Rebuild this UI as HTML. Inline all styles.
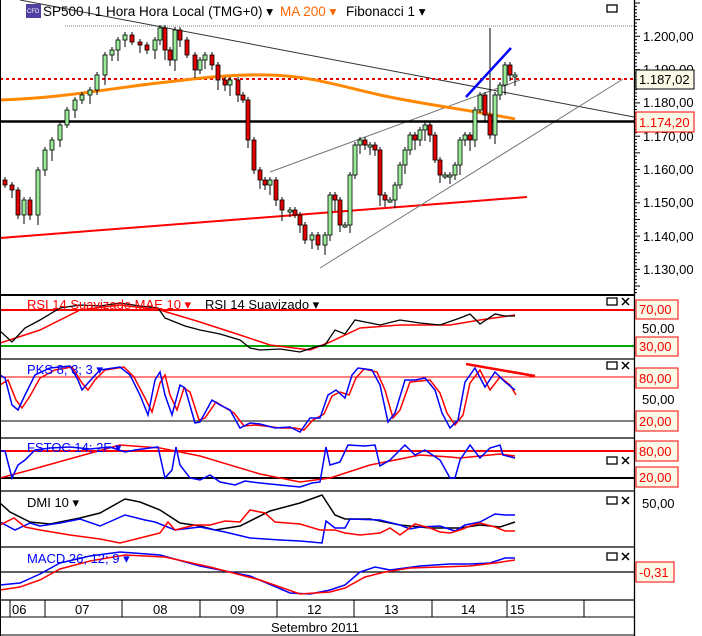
<!DOCTYPE html>
<html><head><meta charset="utf-8"><style>
html,body{margin:0;padding:0;background:#fff;width:702px;height:636px;overflow:hidden}
svg text{font-family:"Liberation Sans",Arial,sans-serif}
</style></head><body>
<svg id="s" width="702" height="636" xmlns="http://www.w3.org/2000/svg">
<rect width="702" height="636" fill="#fff"/>
<line x1="65" y1="26" x2="634" y2="26" stroke="#aaa" stroke-width="1.5" stroke-dasharray="1,1"/>
<line x1="20" y1="0" x2="634" y2="117" stroke="#333" stroke-width="1"/>
<line x1="0" y1="238" x2="527" y2="197" stroke="#f00" stroke-width="2"/>
<line x1="270" y1="172" x2="520" y2="80" stroke="#777" stroke-width="1"/>
<line x1="320" y1="268" x2="623" y2="79" stroke="#777" stroke-width="1"/>
<line x1="0" y1="79" x2="634" y2="79" stroke="#e00" stroke-width="2" stroke-dasharray="3,3"/>
<line x1="0" y1="121.5" x2="634" y2="121.5" stroke="#000" stroke-width="2.5"/>
<path d="M0,100 C60,98 100,90 150,84 S230,74 270,75 S340,86 380,95 S470,110 515,119" fill="none" stroke="#f80" stroke-width="3"/>
<g id="candles"></g>
<line x1="466" y1="97" x2="511" y2="48" stroke="#00f" stroke-width="2.5"/>
<line x1="0" y1="295" x2="634" y2="295" stroke="#000" stroke-width="2"/>
<rect x="26" y="4" width="15" height="14" fill="#5040a0"/>
<text x="27" y="13" font-size="6" fill="#fff">CFD</text>
<text x="43" y="16" font-size="13.5" fill="#000">SP500 I 1 Hora Hora Local (TMG+0)  ▾</text>
<text x="280" y="16" font-size="13.5" fill="#f60">MA 200 ▾</text>
<text x="346" y="16" font-size="13.5" fill="#000">Fibonacci 1 ▾</text>
<rect x="607" y="5" width="10" height="7" fill="none" stroke="#000" stroke-width="1.3"/>
<line x1="0" y1="310" x2="634" y2="310" stroke="#f00" stroke-width="2"/>
<line x1="0" y1="346" x2="634" y2="346" stroke="#0a0" stroke-width="2"/>
<polyline fill="none" stroke="#f00" stroke-width="1.5" points="0,343 40,330 80,310 120,305 160,310 200,322 240,335 270,345 310,350 330,342 360,328 400,325 450,325 480,320 515,315"/>
<polyline fill="none" stroke="#000" stroke-width="1.3" points="0,331 12,342 25,328 40,320 60,308 80,305 100,306 120,303 140,306 158,308 165,318 175,322 185,326 200,330 220,334 240,340 250,348 260,350 280,349 300,352 315,347 325,345 335,330 345,334 355,320 380,325 400,320 420,323 440,325 460,318 470,314 480,324 495,314 505,316 515,316"/>
<text x="27" y="309" font-size="13" fill="#f00">RSI 14 Suavizado MAE 10 ▾</text>
<text x="205" y="309" font-size="13" fill="#000">RSI 14 Suavizado ▾</text>
<line x1="0" y1="359" x2="634" y2="359" stroke="#000" stroke-width="1.3"/>
<line x1="0" y1="377" x2="634" y2="377" stroke="#f00" stroke-width="1"/>
<line x1="0" y1="421" x2="634" y2="421" stroke="#000" stroke-width="1"/>
<polyline fill="none" stroke="#f00" stroke-width="1.5" points="0,385 8,380 16,400 22,408 30,396 40,378 55,370 72,367 82,383 88,390 95,380 105,370 124,367 134,377 145,398 152,412 160,383 165,375 170,395 177,410 184,388 190,392 199,420 205,418 216,402 224,407 234,413 244,426 255,425 265,426 280,428 295,428 304,430 313,420 324,414 332,396 340,392 349,395 356,378 364,369 377,372 385,390 393,418 400,410 410,382 420,381 430,380 440,393 447,413 455,425 463,415 470,383 480,370 490,390 500,377 510,385 516,395"/>
<polyline fill="none" stroke="#00f" stroke-width="1.5" points="0,375 5,378 12,405 18,410 25,395 35,375 50,368 70,366 78,380 82,390 88,383 100,370 120,367 130,375 140,395 148,415 155,380 160,372 165,395 172,415 180,385 185,388 195,423 200,422 212,400 220,405 230,410 240,428 250,423 260,424 275,428 290,427 300,432 310,418 320,418 328,395 336,390 345,398 352,375 358,368 372,370 380,385 388,422 395,413 405,380 415,380 425,378 435,390 442,413 450,428 458,420 465,382 475,368 485,387 495,372 505,382 515,390"/>
<line x1="466" y1="364" x2="535" y2="376" stroke="#f00" stroke-width="2.5"/>
<text x="27" y="374" font-size="13" fill="#00f">PKS 8; 3; 3 ▾</text>
<line x1="0" y1="438" x2="634" y2="438" stroke="#000" stroke-width="1.3"/>
<line x1="0" y1="451" x2="634" y2="451" stroke="#f00" stroke-width="2"/>
<line x1="0" y1="478" x2="634" y2="478" stroke="#000" stroke-width="2"/>
<polyline fill="none" stroke="#f00" stroke-width="1.5" points="0,478 30,470 80,456 120,445 160,448 200,456 260,474 300,482 330,478 370,465 420,455 450,457 460,458 500,454 515,456"/>
<polyline fill="none" stroke="#00f" stroke-width="1.5" points="0,451 5,451 12,478 18,465 25,460 35,450 50,448 70,447 90,449 110,447 125,452 135,450 150,448 158,447 165,478 172,470 176,447 180,465 190,478 200,480 210,475 220,482 235,485 245,481 260,483 280,485 300,487 312,483 320,482 326,447 330,465 340,462 348,445 365,446 375,445 380,466 390,460 400,450 405,445 415,455 425,450 440,460 450,478 455,478 460,460 470,445 480,458 490,448 500,445 503,455 515,458"/>
<text x="27" y="452" font-size="13" fill="#00f">FSTOC 14; 2F ▾</text>
<line x1="0" y1="491" x2="634" y2="491" stroke="#000" stroke-width="1.3"/>
<polyline fill="none" stroke="#000" stroke-width="1.5" points="0,503 10,512 30,522 50,524 80,518 100,513 125,499 140,502 160,510 180,523 200,526 215,530 240,526 270,511 300,503 322,495 335,515 345,519 370,519 400,525 430,528 460,528 480,525 500,527 515,522"/>
<polyline fill="none" stroke="#00f" stroke-width="1.5" points="0,522 15,530 30,523 40,526 60,523 80,519 100,526 125,515 145,520 155,522 175,530 200,527 225,532 250,538 280,540 300,541 322,543 326,521 335,528 345,528 350,519 380,520 400,525 410,529 420,527 440,526 455,531 465,525 480,522 495,514 505,515 515,515"/>
<polyline fill="none" stroke="#f00" stroke-width="1.5" points="0,525 14,518 25,527 40,530 70,535 100,539 120,543 140,538 160,533 168,522 175,530 195,525 210,525 225,521 240,522 250,510 265,513 275,522 300,524 320,530 335,530 345,533 360,535 380,533 390,528 400,535 415,524 430,528 440,532 450,533 460,530 470,526 480,523 495,527 505,531 515,531"/>
<text x="27" y="507" font-size="13" fill="#000">DMI 10 ▾</text>
<line x1="0" y1="547" x2="634" y2="547" stroke="#000" stroke-width="1.3"/>
<line x1="0" y1="572" x2="634" y2="572" stroke="#000" stroke-width="1.3"/>
<polyline fill="none" stroke="#00f" stroke-width="1.5" points="0,585 20,583 40,574 60,563 90,556 120,552 160,555 200,566 250,576 290,593 310,594 330,590 345,585 360,572 375,567 390,570 420,566 450,564 470,564 490,563 505,558 515,558"/>
<polyline fill="none" stroke="#f00" stroke-width="1.5" points="0,590 20,587 40,580 60,569 90,561 125,555 165,557 210,567 260,580 300,594 330,592 345,588 365,577 385,572 410,568 440,567 470,566 495,563 515,560"/>
<text x="27" y="563" font-size="13" fill="#00f">MACD 26; 12; 9 ▾</text>
<line x1="0" y1="600" x2="634" y2="600" stroke="#000" stroke-width="1.3"/>
<line x1="0" y1="617" x2="634" y2="617" stroke="#000" stroke-width="1"/>
<line x1="0" y1="635" x2="634" y2="635" stroke="#000" stroke-width="1"/>
<line x1="0.5" y1="0" x2="0.5" y2="636" stroke="#000" stroke-width="1"/>
<g stroke="#000" stroke-width="1">
<line x1="10" y1="600" x2="10" y2="617"/><line x1="45" y1="600" x2="45" y2="617"/><line x1="122" y1="600" x2="122" y2="617"/><line x1="200" y1="600" x2="200" y2="617"/><line x1="277" y1="600" x2="277" y2="617"/><line x1="354" y1="600" x2="354" y2="617"/><line x1="432" y1="600" x2="432" y2="617"/><line x1="507" y1="600" x2="507" y2="617"/><line x1="584" y1="600" x2="584" y2="617"/>
</g>
<g font-size="13" fill="#000">
<text x="12" y="614">06</text><text x="75" y="614">07</text><text x="153" y="614">08</text><text x="230" y="614">09</text><text x="307" y="614">12</text><text x="384" y="614">13</text><text x="461" y="614">14</text><text x="510" y="614">15</text>
<text x="271" y="632">Setembro 2011</text>
</g>
<line x1="634.5" y1="0" x2="634.5" y2="636" stroke="#000" stroke-width="1.3"/>
<g id="ticks" stroke="#000" stroke-width="1"></g>
<g font-size="13" fill="#000">
<text x="643" y="41">1.200,00</text><text x="643" y="74">1.190,00</text><text x="643" y="107">1.180,00</text><text x="643" y="141">1.170,00</text><text x="643" y="174">1.160,00</text><text x="643" y="207">1.150,00</text><text x="643" y="241">1.140,00</text><text x="643" y="274">1.130,00</text>
<text x="642" y="333">50,00</text><text x="642" y="404">50,00</text><text x="642" y="508">50,00</text>
</g>
<g font-size="13">
<rect x="636" y="70" width="58" height="19" fill="#fafae6" stroke="#000"/><text x="639" y="84" fill="#000">1.187,02</text>
<rect x="636" y="112" width="58" height="20" fill="#fafae6" stroke="#f00"/><text x="639" y="127" fill="#f00">1.174,20</text>
<rect x="636" y="300" width="42" height="19" fill="#fafae6" stroke="#f00"/><text x="639" y="314" fill="#f00">70,00</text>
<rect x="636" y="337" width="42" height="19" fill="#fafae6" stroke="#f00"/><text x="639" y="351" fill="#f00">30,00</text>
<rect x="636" y="368" width="42" height="20" fill="#fafae6" stroke="#f00"/><text x="639" y="383" fill="#f00">80,00</text>
<rect x="636" y="411" width="42" height="20" fill="#fafae6" stroke="#f00"/><text x="639" y="426" fill="#f00">20,00</text>
<rect x="636" y="441" width="42" height="20" fill="#fafae6" stroke="#f00"/><text x="639" y="456" fill="#f00">80,00</text>
<rect x="636" y="467" width="42" height="20" fill="#fafae6" stroke="#f00"/><text x="639" y="482" fill="#f00">20,00</text>
<rect x="636" y="562" width="38" height="20" fill="#fafae6" stroke="#f00"/><text x="639" y="577" fill="#f00">-0,31</text>
</g>
<g id="icons"></g>
</svg>
<script>
(function(){
var NS="http://www.w3.org/2000/svg";
function el(p,t,a){var e=document.createElementNS(NS,t);for(var k in a)e.setAttribute(k,a[k]);p.appendChild(e);return e;}
var c=[[5,185],[12,190],[18,215],[24,200],[30,215],[38,170],[45,150],[52,140],[60,125],[67,110],[75,100],[82,95],[90,90],[97,75],[105,55],[112,50],[118,40],[125,35],[132,42],[140,45],[147,50],[155,40],[160,28],[165,50],[170,60],[175,30],[180,40],[187,55],[195,70],[200,60],[205,55],[212,65],[218,80],[225,85],[230,80],[238,95],[243,100],[248,140],[254,170],[260,180],[265,185],[270,180],[276,200],[282,210],[290,210],[295,215],[300,225],[305,240],[312,235],[318,245],[325,235],[330,195],[335,200],[340,225],[345,225],[350,175],[355,145],[360,140],[365,145],[370,145],[375,150],[380,195],[385,200],[390,200],[395,185],[400,165],[405,150],[410,135],[415,140],[420,130],[425,125],[430,135],[435,160],[440,175],[445,175],[450,175],[455,165],[460,140],[465,135],[470,140],[475,110],[480,95],[485,115],[490,135],[495,95],[500,85],[505,65],[510,75],[515,75]];
var g=document.getElementById("candles");var prev=180;
for(var i=0;i<c.length;i++){var cx=c[i][0],cl=c[i][1],op=prev;var tp=Math.min(op,cl),bt=Math.max(op,cl);
var hi=tp-3-(i*7%7),lo=bt+3+(i*5%9);if(i==c.length-6)hi=28;
el(g,"line",{x1:cx,y1:hi,x2:cx,y2:lo,stroke:"#000","stroke-width":1});
var h=Math.max(bt-tp,2);el(g,"rect",{x:cx-2,y:tp,width:4,height:h,fill:cl>op?"#e00000":"#98ec98",stroke:"#000","stroke-width":0.8});prev=cl;}
var t=document.getElementById("ticks");
for(var yy=3;yy<295;yy+=3.33){var w=(Math.round((yy-36)/3.33)%5==0)?6:3;el(t,"line",{x1:634,y1:yy,x2:634+w,y2:yy});}
var ic=document.getElementById("icons");
[298,362,457,497,553].forEach(function(y){el(ic,"rect",{x:607,y:y,width:10,height:7,fill:"none",stroke:"#000","stroke-width":1.3});
el(ic,"path",{d:"M622,"+y+" l7,7 M629,"+y+" l-7,7",stroke:"#000","stroke-width":1.5});});
})();
</script>
</body></html>
